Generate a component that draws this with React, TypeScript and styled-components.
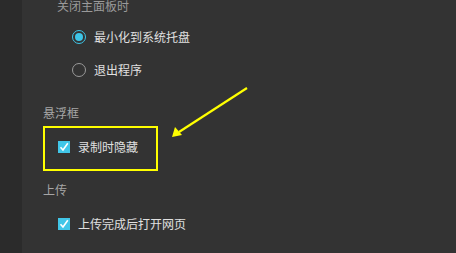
import React from "react";
import styled, { createGlobalStyle } from "styled-components";

const Global = createGlobalStyle`
  html, body { margin: 0; padding: 0; background: #333333; }
  body { font-family: "Noto Sans CJK SC", "Noto Sans", sans-serif; font-size: 12px; }
  #root { height: 253px; overflow: hidden; }
`;

const Page = styled.div`
  display: flex;
  height: 253px;
  width: 456px;
  position: relative;
  background: #333333;
`;

const Sidebar = styled.div`
  width: 22px;
  flex: none;
  background: #2b2b2b;
`;

const Main = styled.div`
  flex: 1;
  display: flex;
  flex-direction: column;
  padding-left: 21px;
`;

const SubGroup = styled.div`
  display: flex;
  flex-direction: column;
  padding-left: 14px;
`;

const SubTitle = styled.div`
  height: 12px;
  line-height: 12px;
  color: #9a9a9a;
  margin-bottom: 15px;
`;

const Row = styled.div<{ $gap?: number; $mt?: number }>`
  display: flex;
  align-items: center;
  height: 20px;
  gap: ${(p) => p.$gap ?? 8}px;
  margin-top: ${(p) => p.$mt ?? 0}px;
  color: #e0e0e0;
  line-height: 20px;
  padding-left: 15px;
`;

const RadioRing = styled.span<{ $on?: boolean }>`
  box-sizing: border-box;
  width: 14px;
  height: 14px;
  border-radius: 50%;
  border: 1.5px solid ${(p) => (p.$on ? "#3dc5e7" : "#9a9a9a")};
  display: flex;
  align-items: center;
  justify-content: center;
  flex: none;
  &::after {
    content: "";
    display: ${(p) => (p.$on ? "block" : "none")};
    width: 8px;
    height: 8px;
    border-radius: 50%;
    background: #3dc5e7;
  }
`;

const SectionTitle = styled.div<{ $mt: number }>`
  height: 14px;
  line-height: 14px;
  color: #a6a6a6;
  margin-top: ${(p) => p.$mt}px;
`;

const Highlight = styled.div`
  box-sizing: border-box;
  width: 115px;
  height: 45px;
  border: 2px solid #ffff00;
  margin-top: 6px;
  padding: 11px 0 0 13px;
`;

const CheckRow = styled.div<{ $pl?: number; $mt?: number }>`
  display: flex;
  align-items: center;
  height: 16px;
  gap: 8px;
  padding-left: ${(p) => p.$pl ?? 0}px;
  margin-top: ${(p) => p.$mt ?? 0}px;
  color: #e0e0e0;
  line-height: 16px;
`;

const CheckBox = styled.span`
  width: 12px;
  height: 12px;
  background: #41c6e8;
  flex: none;
  display: flex;
  align-items: center;
  justify-content: center;
`;

const ArrowLayer = styled.svg`
  position: absolute;
  left: 0;
  top: 0;
  pointer-events: none;
`;

const Check = () => (
  <CheckBox>
    <svg width="12" height="12" viewBox="0 0 12 12">
      <path d="M2.5 6.2 L5 9 L9.8 2.2" fill="none" stroke="#ffffff" strokeWidth="1.6" />
    </svg>
  </CheckBox>
);

export default function App() {
  return (
    <>
      <Global />
      <Page>
        <Sidebar />
        <Main>
          <SubGroup>
            <SubTitle>关闭主面板时</SubTitle>
            <Row>
              <RadioRing $on />
              <span>最小化到系统托盘</span>
            </Row>
            <Row $mt={13}>
              <RadioRing />
              <span>退出程序</span>
            </Row>
          </SubGroup>
          <SectionTitle $mt={26}>悬浮框</SectionTitle>
          <Highlight>
            <CheckRow>
              <Check />
              <span>录制时隐藏</span>
            </CheckRow>
          </Highlight>
          <SectionTitle $mt={12}>上传</SectionTitle>
          <CheckRow $pl={15} $mt={19}>
            <Check />
            <span>上传完成后打开网页</span>
          </CheckRow>
        </Main>
        <ArrowLayer width="456" height="253" viewBox="0 0 456 253">
          <line x1="247" y1="88" x2="179" y2="132" stroke="#ffff00" strokeWidth="2.2" />
          <polygon points="172,137 175,127 182,135" fill="#ffff00" />
        </ArrowLayer>
      </Page>
    </>
  );
}
